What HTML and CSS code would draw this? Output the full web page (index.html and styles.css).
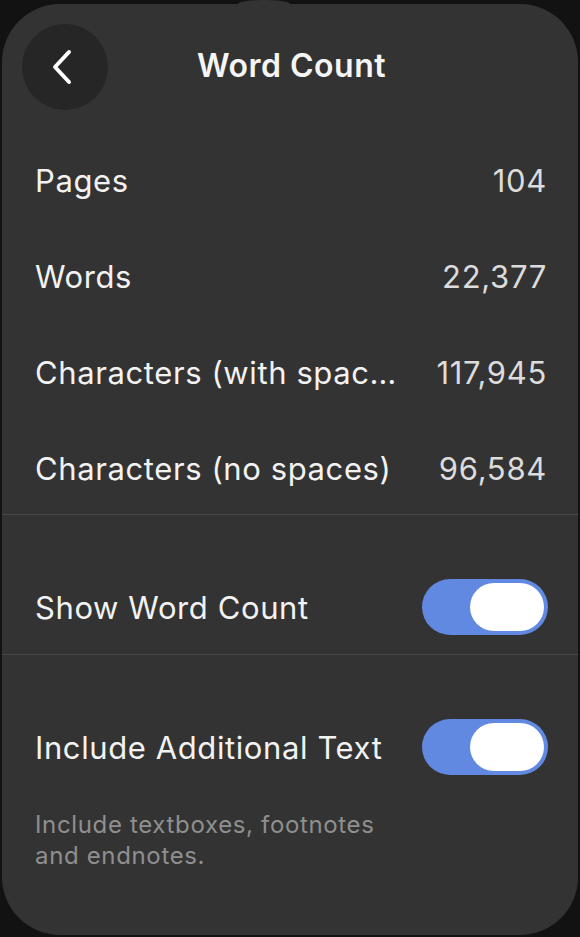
FILE: index.html
```html
<!DOCTYPE html>
<html>
<head>
<meta charset="utf-8">
<link rel="stylesheet" href="styles.css">
</head>
<body>
<div class="panel">
  <div class="notch"></div>
  <header class="header">
    <button class="back" aria-label="Back">
      <svg width="30" height="40" viewBox="0 0 30 40"><path d="M22 5 L8 20 L22 35" fill="none" stroke="#fff" stroke-width="4" stroke-linecap="round" stroke-linejoin="round"/></svg>
    </button>
    <h1 class="title">Word Count</h1>
  </header>
  <div class="stats">
    <div class="row"><span class="label">Pages</span><span class="value">104</span></div>
    <div class="row"><span class="label">Words</span><span class="value">22,377</span></div>
    <div class="row"><span class="label trunc">Characters (with spaces)</span><span class="value">117,945</span></div>
    <div class="row"><span class="label">Characters (no spaces)</span><span class="value">96,584</span></div>
  </div>
  <div class="section">
    <div class="trow"><span class="label">Show Word Count</span><span class="toggle"><span class="knob"></span></span></div>
  </div>
  <div class="section last">
    <div class="trow"><span class="label">Include Additional Text</span><span class="toggle"><span class="knob"></span></span></div>
    <p class="note">Include textboxes, footnotes<br>and endnotes.</p>
  </div>
</div>
</body>
</html>
```
FILE: styles.css
```css
html, body { margin: 0; padding: 0; }
body {
  background: #121212;
  width: 580px;
  height: 937px;
  overflow: hidden;
  font-family: Inter, "Noto Sans", sans-serif;
}
.panel {
  position: relative;
  margin: 4px 2px 0 2px;
  height: 931px;
  background: #333333;
  border-radius: 58px;
  box-sizing: border-box;
  padding: 0 30px 0 33px;
}
.notch {
  position: absolute;
  left: 236px;
  top: -4px;
  width: 52px;
  height: 8px;
  background: #333333;
  border-radius: 50% 50% 0 0;
}
.header {
  height: 128px;
  display: flex;
  align-items: center;
  justify-content: center;
  position: relative;
}
.back {
  position: absolute;
  left: -13px;
  top: 20px;
  width: 86px;
  height: 86px;
  border-radius: 50%;
  border: none;
  background: #262626;
  display: flex;
  align-items: center;
  justify-content: center;
  padding: 0 6px 0 0;
}
.title {
  margin: 0;
  margin-top: -6px;
  margin-left: 0;
  font-size: 32px;
  font-weight: 600;
  color: #f5f5f5;
  letter-spacing: 0.5px;
}
.row {
  height: 96px;
  display: flex;
  align-items: center;
  justify-content: space-between;
  padding-right: 2px;
}
.label {
  font-size: 31px;
  color: #f2f2f2;
  letter-spacing: 0.6px;
  white-space: nowrap;
}
.trunc {
  width: 362px;
  overflow: hidden;
  text-overflow: ellipsis;
}
.value {
  font-size: 31px;
  color: #dcdcdc;
  letter-spacing: 0.7px;
  margin-right: -1px;
}
.stats {
  border-bottom: 1px solid #474747;
  margin: 0 -30px 0 -33px;
  padding: 0 30px 0 33px;
  height: 383px;
  box-sizing: border-box;
}
.section {
  border-bottom: 1px solid #474747;
  margin: 0 -30px 0 -33px;
  padding: 64px 30px 19px 33px;
  height: 140px;
  box-sizing: border-box;
}
.section.last { border-bottom: none; height: auto; }
.trow {
  height: 56px;
  display: flex;
  align-items: center;
  justify-content: space-between;
}
.toggle {
  width: 126px;
  height: 56px;
  border-radius: 28px;
  background: #6189e1;
  position: relative;
  display: flex;
  align-items: center;
  justify-content: flex-end;
  padding-right: 4px;
  box-sizing: border-box;
}
.knob {
  width: 74px;
  height: 48px;
  border-radius: 24px;
  background: #ffffff;
}
.note {
  margin: 34px 0 0 0;
  font-size: 24px;
  line-height: 31px;
  color: #8f8f8f;
  letter-spacing: 0.65px;
}
```
